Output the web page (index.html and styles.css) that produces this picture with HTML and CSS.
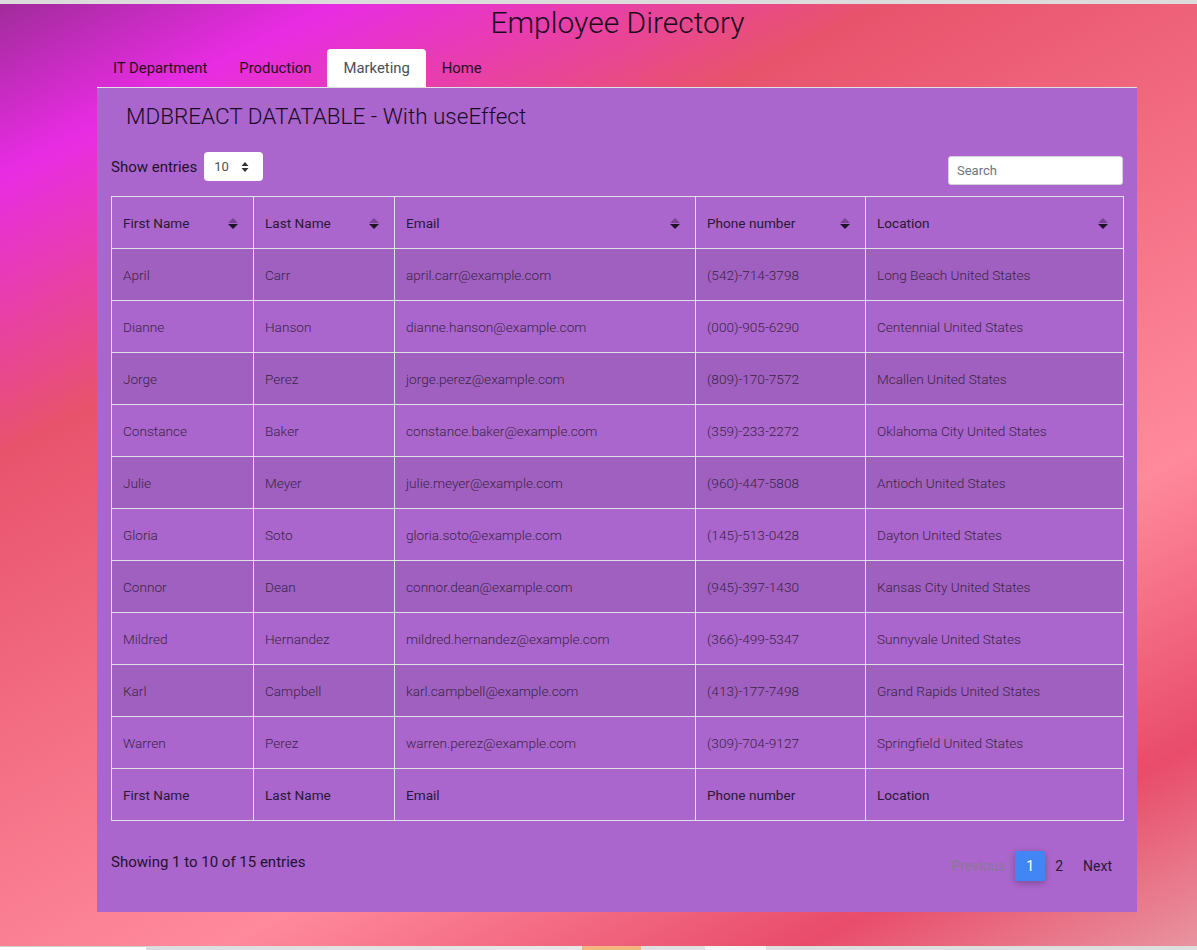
FILE: index.html
```html
<!DOCTYPE html>
<html lang="en">
<head>
<meta charset="utf-8">
<title>Employee Directory</title>
<link rel="stylesheet" href="styles.css">
</head>
<body>
<div class="topbar"></div>
<div class="page">
  <h1 class="title">Employee Directory</h1>
  <div class="wrap">
    <ul class="tabs">
      <li class="tab">IT Department</li>
      <li class="tab">Production</li>
      <li class="tab active">Marketing</li>
      <li class="tab">Home</li>
    </ul>
    <div class="panel">
      <h3 class="panel-title">MDBREACT DATATABLE - With useEffect</h3>
      <div class="controls">
        <label class="entries">Show entries
          <span class="select">10
            <svg class="sel-arrow" width="8" height="12" viewBox="0 0 8 12"><path d="M4 1 L7.5 5 H0.5 Z M4 11 L7.5 7 H0.5 Z" fill="#333"/></svg>
          </span>
        </label>
        <div class="search">Search</div>
      </div>
      <table class="grid">
        <thead>
          <tr>
            <th class="c1">First Name<span class="sort"></span></th>
            <th class="c2">Last Name<span class="sort"></span></th>
            <th class="c3">Email<span class="sort"></span></th>
            <th class="c4">Phone number<span class="sort"></span></th>
            <th class="c5">Location<span class="sort"></span></th>
          </tr>
        </thead>
        <tbody>
          <tr><td>April</td><td>Carr</td><td>april.carr@example.com</td><td>(542)-714-3798</td><td>Long Beach United States</td></tr>
          <tr><td>Dianne</td><td>Hanson</td><td>dianne.hanson@example.com</td><td>(000)-905-6290</td><td>Centennial United States</td></tr>
          <tr><td>Jorge</td><td>Perez</td><td>jorge.perez@example.com</td><td>(809)-170-7572</td><td>Mcallen United States</td></tr>
          <tr><td>Constance</td><td>Baker</td><td>constance.baker@example.com</td><td>(359)-233-2272</td><td>Oklahoma City United States</td></tr>
          <tr><td>Julie</td><td>Meyer</td><td>julie.meyer@example.com</td><td>(960)-447-5808</td><td>Antioch United States</td></tr>
          <tr><td>Gloria</td><td>Soto</td><td>gloria.soto@example.com</td><td>(145)-513-0428</td><td>Dayton United States</td></tr>
          <tr><td>Connor</td><td>Dean</td><td>connor.dean@example.com</td><td>(945)-397-1430</td><td>Kansas City United States</td></tr>
          <tr><td>Mildred</td><td>Hernandez</td><td>mildred.hernandez@example.com</td><td>(366)-499-5347</td><td>Sunnyvale United States</td></tr>
          <tr><td>Karl</td><td>Campbell</td><td>karl.campbell@example.com</td><td>(413)-177-7498</td><td>Grand Rapids United States</td></tr>
          <tr><td>Warren</td><td>Perez</td><td>warren.perez@example.com</td><td>(309)-704-9127</td><td>Springfield United States</td></tr>
        </tbody>
        <tfoot>
          <tr><th>First Name</th><th>Last Name</th><th>Email</th><th>Phone number</th><th>Location</th></tr>
        </tfoot>
      </table>
      <div class="footer">
        <div class="info">Showing 1 to 10 of 15 entries</div>
        <ul class="pager">
          <li class="pg disabled">Previous</li>
          <li class="pg current">1</li>
          <li class="pg">2</li>
          <li class="pg">Next</li>
        </ul>
      </div>
    </div>
  </div>
</div>
<div class="bottombar">
  <span class="seg s1"></span><span class="seg s2"></span><span class="seg s3"></span><span class="seg s4"></span><span class="seg s5"></span><span class="seg s6"></span>
</div>
</body>
</html>
```
FILE: styles.css
```css
* { box-sizing: border-box; }
html, body { margin: 0; padding: 0; }
body {
  font-family: Roboto, "Liberation Sans", sans-serif;
  color: #212529;
  width: 1197px;
  height: 950px;
  overflow: hidden;
}
.topbar { height: 4px; background: #dcdcdc; }
.page {
  height: 942px;
  background: linear-gradient(153deg, #a02c9a 0%, #e82ce3 11%, #e8536c 29%, #ff8a9c 68%, #e84c6a 87%, #e894a0 100%);
  padding-top: 1px;
}
.title {
  margin: 0;
  padding-left: 38px;
  text-align: center;
  font-weight: 300;
  font-size: 30px;
  line-height: 36px;
  color: #1a0a20;
}
.wrap { width: 1040px; margin: 8px 0 0 97px; }
.tabs {
  list-style: none;
  margin: 0;
  padding: 0;
  display: flex;
  height: 38px;
}
.tab {
  padding: 0 16px;
  line-height: 38px;
  font-size: 14.85px;
  color: #2a0f1a;
  border-radius: 4px 4px 0 0;
}
.tab.active { background: #fff; color: #495057; }
.panel {
  background: #aa66cc;
  border-top: 1px solid #dee2e6;
  height: 825px;
  padding: 0 14px;
  display: flex;
  flex-direction: column;
}
.panel-title {
  margin: 14px 0 0 15px;
  font-weight: 300;
  font-size: 22.5px;
  line-height: 28px;
  color: #1a0a28;
}
.controls {
  display: flex;
  justify-content: space-between;
  align-items: flex-start;
  margin-top: 22px;
  height: 44px;
}
.entries {
  display: flex;
  align-items: center;
  gap: 7px;
  font-size: 15px;
  color: #1f1230;
}
.select {
  width: 59px;
  height: 29px;
  background: #fff;
  border-radius: 4px;
  display: flex;
  align-items: center;
  justify-content: space-between;
  padding: 0 14px 0 10px;
  font-size: 13px;
  color: #495057;
}
.search {
  margin-top: 4px;
  width: 175px;
  height: 29px;
  background: #fff;
  border: 1px solid #ced4da;
  border-radius: 3px;
  padding-left: 8px;
  font-size: 13px;
  line-height: 27px;
  color: #6c757d;
}
.grid {
  border-collapse: collapse;
  width: 1012px;
  table-layout: fixed;
}
.grid th, .grid td {
  border: 1px solid #dee2e6;
  height: 52px;
  padding: 0 11px;
  text-align: left;
  font-size: 13.6px;
  color: #2a1838;
}
.grid th { font-weight: 400; position: relative; }
.grid td { font-weight: 300; color: #3a2448; }
.grid tbody tr:nth-child(odd) td { background: rgba(0,0,0,0.06); }
.c1 { width: 142px; }
.c2 { width: 141px; }
.c3 { width: 301px; }
.c4 { width: 170px; }
.c5 { width: 258px; }
.sort {
  position: absolute;
  right: 15px;
  top: 21px;
  width: 10px;
  height: 11px;
}
.sort::before, .sort::after {
  content: "";
  position: absolute;
  left: 0;
  border-left: 5px solid transparent;
  border-right: 5px solid transparent;
}
.sort::before { top: 0; border-bottom: 5px solid rgba(30,10,40,0.35); }
.sort::after { top: 6px; border-top: 5px solid #1e1428; }
.footer {
  display: flex;
  justify-content: space-between;
  align-items: flex-start;
  margin-top: 32px;
}
.info { font-size: 15px; color: #1f1230; margin-top: 0; }
.pager {
  list-style: none;
  margin: -2px 1px 0 0;
  padding: 0;
  display: flex;
  align-items: center;
}
.pg {
  font-size: 14px;
  line-height: 30px;
  padding: 0 10px;
  color: #2a1838;
  border-radius: 2px;
}
.pg.disabled { color: #8a7796; }
.pg.current {
  background: #4285f4;
  color: #fff;
  width: 30px;
  padding: 0;
  text-align: center;
  box-shadow: 0 2px 5px rgba(0,0,0,0.16), 0 2px 10px rgba(0,0,0,0.12);
}
.bottombar { display: flex; height: 4px; }
.seg { display: block; height: 4px; }
.s1 { width: 146px; background: #ffffff; border-top: 1px solid #cfcfcf; }
.s2 { width: 436px; background: linear-gradient(90deg, #dcdcdc, #e8e8e8); }
.s3 { width: 59px; background: #f6b57e; }
.s4 { width: 64px; background: #e0e0e0; }
.s5 { width: 61px; background: #f5f5f5; }
.s6 { flex: 1; background: #dedede; }
```
